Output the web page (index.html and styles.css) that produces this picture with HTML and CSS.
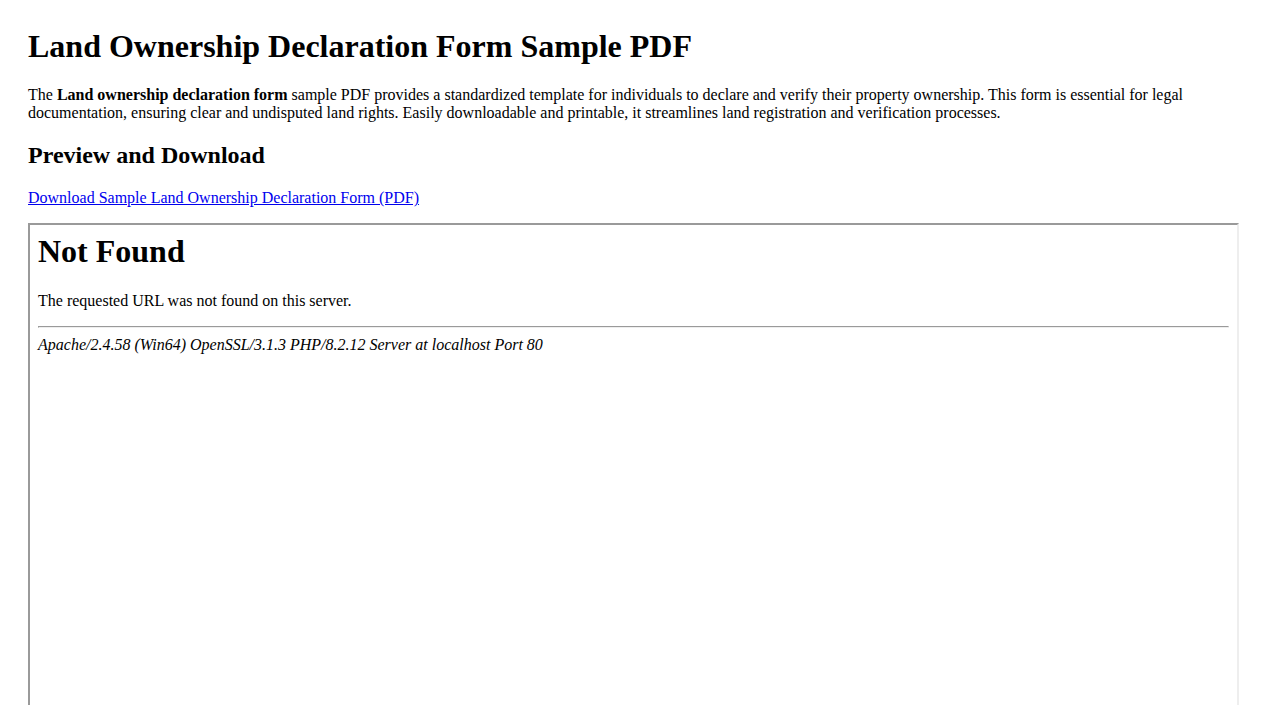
FILE: index.html
```html
<!DOCTYPE html>
<html>

<head>
    <meta name="viewport" content="width=device-width, initial-scale=1.0">
    <link rel="stylesheet" href="styles.css">
</head>

<body>
    <div class="page">
        <h1>Land Ownership Declaration Form Sample PDF</h1>
        <p>The <strong>Land ownership declaration form</strong> sample PDF provides a standardized template for individuals to declare and verify their property ownership. This form is essential for legal documentation, ensuring clear and undisputed land rights. Easily downloadable and printable, it streamlines land registration and verification processes.</p>

        <h2>Preview and Download</h2>
        <p><a href="#">Download Sample Land Ownership Declaration Form (PDF)</a></p>

        <div class="preview">
            <div class="preview-body">
                <h1>Not Found</h1>
                <p>The requested URL was not found on this server.</p>
                <hr>
                <address>Apache/2.4.58 (Win64) OpenSSL/3.1.3 PHP/8.2.12 Server at localhost Port 80</address>
            </div>
        </div>
    </div>
</body>

</html>
```

FILE: styles.css
```css
body {
    margin: 8px;
    font-family: "Liberation Serif", "Times New Roman", serif;
    font-size: 16px;
    color: black;
    background: white;
}

.page {
    padding: 20px;
}

h1 {
    font-size: 2em;
    margin: 0 0 0.67em;
}

h2 {
    font-size: 1.5em;
    margin: 0.83em 0;
}

p {
    margin: 16px 0;
}

a {
    color: #0000ee;
}

.preview {
    box-sizing: content-box;
    width: 100%;
    height: 600px;
    border: 2px solid;
    border-color: #9a9a9a #eeeeee #eeeeee #9a9a9a;
}

.preview-body {
    margin: 8px;
}

hr {
    margin: 8px 0;
    height: 0;
    border: 1px solid;
    border-color: #9a9a9a #eeeeee #eeeeee #9a9a9a;
}

address {
    font-style: italic;
}
```
